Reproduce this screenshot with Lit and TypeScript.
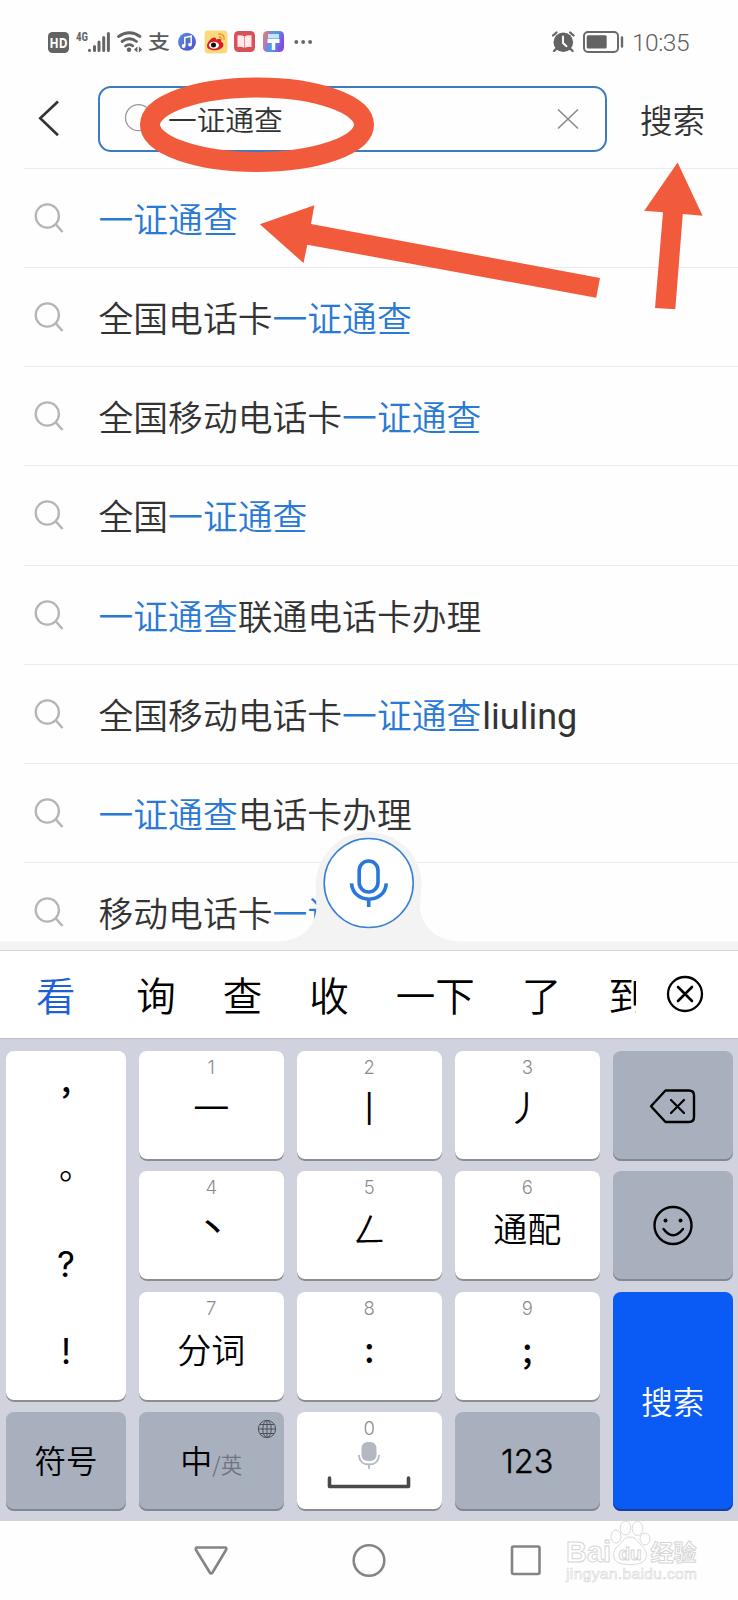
import { LitElement, html, css } from "lit";
import { customElement, property } from "lit/decorators.js";

type Part = { t: string; kind: "hit" | "plain" | "latin" };
const hit = (t: string): Part => ({ t, kind: "hit" });
const plain = (t: string): Part => ({ t, kind: "plain" });
const latin = (t: string): Part => ({ t, kind: "latin" });
const Q = "一证通查";

const SUGGESTIONS: Part[][] = [
  [hit(Q)],
  [plain("全国电话卡"), hit(Q)],
  [plain("全国移动电话卡"), hit(Q)],
  [plain("全国"), hit(Q)],
  [hit(Q), plain("联通电话卡办理")],
  [plain("全国移动电话卡"), hit(Q), latin("liuling")],
  [hit(Q), plain("电话卡办理")],
  [plain("移动电话卡"), hit(Q)],
];

@customElement("status-bar")
class StatusBar extends LitElement {
  static styles = css`
    :host { display: flex; height: 84px; box-sizing: border-box; padding: 17px 0 0 46px; align-items: flex-start; }
    .left { display: block; flex: none; width: 270px; height: 50px; }
    .right { display: block; flex: none; width: 76px; height: 50px; margin-left: 234px; }
    .clock { font: 300 24.5px/50px Roboto, sans-serif; color: #606060; margin-left: 6px; padding-top: 1px; letter-spacing: -0.5px; }
    .hd { font: 700 13.5px "Open Sans", sans-serif; fill: #fff; }
    .net { font: 700 12px "Roboto Condensed", Roboto, sans-serif; fill: #666; }
    .pay { font: 500 19px "Noto Sans CJK SC", sans-serif; fill: #5a5a5a; }
  `;
  render() {
    return html`
      <svg class="left" viewBox="46 17 270 50">
        <defs>
          <linearGradient id="m" x1="0" y1="0" x2="1" y2="1"><stop offset="0" stop-color="#5a8fe8" /><stop offset="1" stop-color="#4a4fc0" /></linearGradient>
          <linearGradient id="p" x1="0" y1="0" x2="1" y2="0.3"><stop offset="0" stop-color="#f2894a" /><stop offset="0.35" stop-color="#9a7ad8" /><stop offset="0.6" stop-color="#3aa8e8" /><stop offset="1" stop-color="#8a4ae0" /></linearGradient>
        </defs>
        <rect x="48" y="32" width="21" height="21" rx="4.5" fill="#636363" />
        <text class="hd" x="49.5" y="47.500" textLength="18" lengthAdjust="spacingAndGlyphs">HD</text>
        <text class="net" x="76" y="40.6" textLength="12" lengthAdjust="spacingAndGlyphs">4G</text>
        <g stroke="#666" stroke-width="3" stroke-linecap="round">
          <path d="M89.5 50.2v.4M94.5 46.5v4M99 42v8.5M103.7 37.5v13M108.4 33.5v17" />
        </g>
        <g fill="none" stroke="#636363" stroke-width="2.8" stroke-linecap="round">
          <path d="M118.5 36.5q11-7.5 21.5 0M122 41.5q7.5-5.5 14.5 0M125.5 46q3.5-2.6 7.2-.2" />
        </g>
        <circle cx="129" cy="49.8" r="2.2" fill="#636363" />
        <path d="M134 49.500l3.400-3v6zM142.300 49.500l-3.400-3v6z" fill="#636363" />
        <text class="pay" x="148" y="49" textLength="22" lengthAdjust="spacingAndGlyphs">支</text>
        <circle cx="187" cy="41.800" r="9" fill="url(#m)" />
        <path d="M184.800 46v-8.500l6.400-1.300v8" fill="none" stroke="#fff" stroke-width="1.500" />
        <circle cx="183.600" cy="46" r="1.900" fill="#fff" /><circle cx="190" cy="44.600" r="1.900" fill="#fff" />
        <rect x="204.500" y="30.500" width="23" height="23" rx="4" fill="#fadb7c" />
        <path d="M207 46c0-4 5-9.500 8-8.500 1.400.4 1 2 1 2s4-1.800 5 0c.6 1.200-.2 2-.2 2 2 .8 3 2 2.600 3.800C222.800 49 218 50.500 214 50.300 210 50 207 48.500 207 46z" fill="#d9202a" />
        <ellipse cx="214" cy="45.200" rx="5" ry="3.500" fill="#fff" /><circle cx="213.500" cy="45" r="2.500" fill="#111" />
        <path d="M218.500 34c4-.6 6.500 2.500 5.500 6M219 37c1.800-.2 2.800 1 2.400 2.500" fill="none" stroke="#f08a24" stroke-width="1.300" />
        <rect x="234" y="31" width="21" height="21" rx="4.500" fill="#d95158" />
        <path d="M237.500 35.500q4-.8 6.700.8v11.500q-3-1.300-6.700-.8zM251.500 35.500q-4-.8-6.700.8v11.500q3-1.300 6.700-.8z" fill="#ffe9ea" />
        <rect x="263" y="31" width="21" height="21" rx="4.500" fill="url(#p)" />
        <path d="M268 34h11v4.500h-11z" fill="#bfeaf5" /><path d="M267.500 39h12v4h-4.300v7h-3.400v-7h-4.300z" fill="#fff" />
        <g fill="#666"><circle cx="296.300" cy="42" r="1.900" /><circle cx="303.200" cy="42" r="1.900" /><circle cx="310.100" cy="42" r="1.900" /></g>
      </svg>
      <svg class="right" viewBox="550 17 76 50">
        <circle cx="563.300" cy="42.300" r="9.800" fill="#636363" />
        <path d="M553 35.500l3.500-3M573.600 35.500l-3.500-3M556 49l-2 2M570.600 49l2 2" stroke="#636363" stroke-width="2.300" stroke-linecap="round" />
        <path d="M563 36.500v6.500l3.500 3.200" fill="none" stroke="#fff" stroke-width="1.900" stroke-linecap="round" />
        <rect x="584" y="32" width="34" height="20" rx="4" fill="none" stroke="#6a6a6a" stroke-width="2" />
        <rect x="586.700" y="35.300" width="20" height="13.300" rx="1.500" fill="#636363" />
        <path d="M622 37.500v9" stroke="#6a6a6a" stroke-width="2.400" stroke-linecap="round" />
      </svg>
      <span class="clock">10:35</span>`;
  }
}

@customElement("search-header")
class SearchHeader extends LitElement {
  static styles = css`
    :host { display: flex; height: 84px; box-sizing: border-box; padding-top: 2px; align-items: flex-start; font-family: "Noto Sans CJK SC", sans-serif; color: #333; }
    .back { width: 98px; height: 66px; flex: none; }
    .box { width: 509px; height: 66px; flex: none; box-sizing: border-box; border: 2px solid #3b7cc0; border-radius: 13px; display: flex; align-items: center; }
    .glass { width: 32px; height: 32px; margin: 0 0 0 24px; flex: none; }
    .q { flex: 1; margin-left: 12px; font-size: 28.700px; line-height: 40px; font-weight: 350; }
    .clear { width: 24px; height: 24px; margin: 0 25px 0 0; }
    .go { margin-left: 33px; font-size: 32.500px; line-height: 66px; font-weight: 350; }
  `;
  render() {
    return html`
      <svg class="back" viewBox="0 86 98 66"><path d="M58 101.500L40.200 118.300 58 135.200" fill="none" stroke="#333" stroke-width="2.600" /></svg>
      <div class="box">
        <svg class="glass" viewBox="0 0 32 32"><circle cx="14.500" cy="14.700" r="13" fill="none" stroke="#999" stroke-width="1.300" /><path d="M24 24l6 6" stroke="#999" stroke-width="1.300" /></svg>
        <span class="q">一证通查</span>
        <svg class="clear" viewBox="0 0 24 24"><path d="M2 2.500l20 19M22 2.500l-20 19" stroke="#8a8a8a" stroke-width="1.600" /></svg>
      </div>
      <span class="go">搜索</span>`;
  }
}

@customElement("suggestion-row")
class SuggestionRow extends LitElement {
  @property({ attribute: false }) parts: Part[] = [];
  static styles = css`
    :host { display: flex; height: 99.150px; box-sizing: border-box; margin-left: 24px; border-top: 1px solid #ebebeb; align-items: center; font-family: "Noto Sans CJK SC", sans-serif; }
    .icon { width: 32px; height: 32px; margin: 0 32.500px 0 10px; flex: none; }
    .text { white-space: nowrap; font-size: 34.800px; line-height: 50px; color: #333; font-weight: 350; }
    .hit { color: #2a7ad5; }
    .latin { font: 400 36px/40px Roboto, sans-serif; margin-left: 1px; }
  `;
  render() {
    return html`
      <svg class="icon" viewBox="0 0 32 32"><circle cx="13.300" cy="14" r="11.600" fill="none" stroke="#b5b5b5" stroke-width="2.300" /><path d="M21.500 22l7 8" stroke="#b5b5b5" stroke-width="2.600" /></svg>
      <span class="text">${this.parts.map((p) => html`<span class=${p.kind}>${p.t}</span>`)}</span>`;
  }
}

@customElement("stroke-keyboard")
class StrokeKeyboard extends LitElement {
  static styles = css`
    :host { display: block; font-family: "Noto Sans CJK SC", sans-serif; color: #000; font-weight: 350; }
    .strip { display: flex; height: 88px; box-sizing: border-box; border-top: 1px solid #d6d6d6; background: #fff; align-items: center; }
    .cands { display: flex; width: 636px; overflow: hidden; white-space: nowrap; font-size: 39.500px; line-height: 60px; gap: 47px; box-sizing: border-box; padding-left: 36px; margin-top: -2px; }
    .cand { flex: none; }
    .first { color: #1f5fd6; margin-right: 13.700px; }
    .close { width: 40px; height: 40px; margin-left: 29px; flex: none; }
    .keys { display: grid; height: 483px; box-sizing: border-box; background: #d0d3dd; border-top: 1px solid #bbbfc6; padding: 12px 5px 9px 6px;
      grid-template-columns: 120px 145.500px 145.500px 145.500px 120.500px; grid-template-rows: 110px 110px 110px 99px; column-gap: 12.500px; row-gap: 10.300px; }
    .key { background: #fff; border-radius: 8px; box-shadow: inset 0 -2px 0 #8b8d92; display: grid; grid-template-rows: 29px 1fr; justify-items: center; font-size: 34px; line-height: 50px; }
    .num { font: 300 18.500px/20px Inter, sans-serif; color: #8c8c8c; padding-top: 6px; }
    .face { padding-top: 3px; }
    .stroke { font-size: 36px; padding-top: 1px; }
    .left { padding-right: 5px; }
    .dot { font-size: 31px; padding: 1px 0 0 3px; font-weight: 500; }
    .punct { font-weight: 500; padding-top: 3px; }
    .dark { background: #a8b0be; box-shadow: inset 0 -2px 0 #83878f; grid-template-rows: 1fr; align-items: center; }
    .side { grid-row: span 3; display: flex; flex-direction: column; gap: 37px; padding-top: 14px; align-items: center; }
    .latin { font: 400 35px/50px Inter, sans-serif; }
    .comma { line-height: 26px; margin-bottom: 24px; font-weight: 500; }
    .stop { line-height: 25px; margin: 0 0 25px 20px; }
    .go { grid-row: span 2; background: #0a5af5; box-shadow: inset 0 -2px 0 #1640a0; color: #fff; font-size: 31.500px; }
    .go .label { padding-bottom: 2px; }
    .sym .label { padding-bottom: 4px; }
    .sym { font-size: 31.500px; }
    .lang { position: relative; }
    .pair { font-size: 32px; display: flex; align-items: baseline; }
    .en { font-size: 21.500px; color: #6f747e; }
    .globe { position: absolute; right: 7px; top: 7px; width: 20px; height: 20px; }
    .digits { font: 300 32.500px/50px Inter, sans-serif; }
    .digits .label { padding-top: 1px; -webkit-text-stroke: 0.4px #000; }
    .ic { width: 60px; height: 50px; }
    .space { width: 90px; height: 58px; }
  `;
  key(n: string, face: string, kind = "") {
    return html`<div class="key"><span class="num">${n}</span><span class="face ${kind}">${face}</span></div>`;
  }
  render() {
    return html`
      <div class="strip">
        <div class="cands">
          <span class="cand first">看</span>${["询", "查", "收", "一下", "了", "到"].map((c) => html`<span class="cand">${c}</span>`)}
        </div>
        <svg class="close" viewBox="0 0 40 40" fill="none" stroke="#000" stroke-width="2.300"><circle cx="20" cy="19" r="17" /><path d="M13 12l14 14M27 12l-14 14" stroke-width="2.600" stroke-linecap="round" /></svg>
      </div>
      <div class="keys">
        <div class="key side">
          <span class="comma">,</span><span class="stop">。</span><span class="latin">?</span><span class="latin">!</span>
        </div>
        ${this.key("1", "一", "stroke")}${this.key("2", "丨", "stroke")}${this.key("3", "丿", "stroke left")}
        <div class="key dark"><svg class="ic" viewBox="0 0 60 50" fill="none" stroke="#000" stroke-width="2.400" stroke-linejoin="round"><path d="M22.500 9.500H46q5 0 5 5V36q0 5-5 5H22.500L8 25.200z" /><path d="M28 19l13 13M41 19l-13 13" stroke-width="2.200" stroke-linecap="round" /></svg></div>
        ${this.key("4", "丶", "dot")}${this.key("5", "ㄥ")}${this.key("6", "通配")}
        <div class="key dark"><svg class="ic" viewBox="0 0 60 50" fill="none" stroke="#000" stroke-width="2.400"><circle cx="30" cy="24.500" r="18.500" /><path d="M20.500 28q9.500 12.500 19.500 0" stroke-linecap="round" /><circle cx="22.500" cy="19.500" r="2" fill="#000" stroke="none" /><circle cx="37.500" cy="19.500" r="2" fill="#000" stroke="none" /></svg></div>
        ${this.key("7", "分词")}${this.key("8", ":", "punct")}${this.key("9", ";", "punct")}
        <div class="key dark go"><span class="label">搜索</span></div>
        <div class="key dark sym"><span class="label">符号</span></div>
        <div class="key dark lang">
          <span class="pair">中<span class="en">/英</span></span>
          <svg class="globe" viewBox="0 0 20 20" fill="none" stroke="#4a4f58" stroke-width="1"><circle cx="10" cy="10" r="8.600" /><ellipse cx="10" cy="10" rx="4.200" ry="8.600" /><path d="M10 1v18M1 10h18M3 5.500h14M3 14.500h14" /></svg>
        </div>
        <div class="key"><span class="num">0</span>
          <svg class="space" viewBox="0 0 90 58"><rect x="37.500" y="1" width="15" height="19" rx="6" fill="#b4b8c2" /><path d="M34.800 14q1 9.500 10.200 9.500T55.200 14M45 23v5" fill="none" stroke="#b4b8c2" stroke-width="1.800" /><path d="M5.500 37v8.500H84.500V37" fill="none" stroke="#4a4a4a" stroke-width="3.600" stroke-linecap="round" stroke-linejoin="round" /></svg>
        </div>
        <div class="key dark digits"><span class="label">123</span></div>
      </div>`;
  }
}

@customElement("app-root")
class AppRoot extends LitElement {
  static styles = css`
    :host { display: block; position: relative; width: 738px; height: 1600px; overflow: hidden; background: #fefefe; }
    .list { position: relative; height: 782px; overflow: hidden; }
    .dock { position: absolute; left: 0; bottom: 0; width: 738px; height: 122px; }
    .nav { display: flex; height: 79px; }
    .navicons { width: 738px; height: 79px; }
    .marks { position: absolute; left: 0; top: 0; width: 738px; height: 330px; }
    .wm { position: absolute; left: 560px; top: 1515px; width: 150px; height: 75px; }
    .w { fill: #fff; stroke: #d6d6d6; stroke-width: 1; font-family: "Liberation Sans", "Noto Sans CJK SC", sans-serif; font-weight: 700; }
    .w1 { font-size: 30px; }
    .w2 { font-size: 19px; }
    .w3 { font-size: 23px; font-family: "Noto Sans CJK SC", sans-serif; }
    .w4 { font-size: 15.500px; font-weight: 400; stroke-width: 0.600; }
  `;
  render() {
    return html`
      <status-bar></status-bar>
      <search-header></search-header>
      <div class="list">
        ${SUGGESTIONS.map((s) => html`<suggestion-row .parts=${s}></suggestion-row>`)}
        <svg class="dock" viewBox="0 828 738 122">
          <path d="M0 941.500H278C300 941 315 928 316.500 908Q316 900 315.700 885A53 53 0 0 1 421.700 885Q420 900 420 908C422 928 438 941 460 941.500H738V950H0z" fill="#f3f3f3" />
          <circle cx="368.700" cy="883" r="44.500" fill="#fff" stroke="#3b80d2" stroke-width="1.600" />
          <g fill="none" stroke="#2878dc" stroke-width="3.600"><rect x="359.200" y="861" width="18.800" height="31" rx="9.400" /><path d="M351.500 883.300C353 904.500 385 904.500 386.300 883.300M368.700 899.500V907" /></g>
        </svg>
      </div>
      <stroke-keyboard></stroke-keyboard>
      <div class="nav">
        <svg class="navicons" viewBox="0 1521 738 79" fill="none" stroke="#858585" stroke-width="2.600" stroke-linejoin="round">
          <path d="M197 1547.500H225.500Q227 1548 226 1550L212.500 1572.500Q211 1574.500 209.800 1572.500L196 1550Q195 1548 197 1547.500z" />
          <circle cx="369" cy="1560.500" r="15.300" /><rect x="512" y="1546.500" width="27.500" height="27.500" rx="1.500" />
        </svg>
      </div>
      <svg class="wm" viewBox="560 1515 150 75">
        <g fill="#fff" stroke="#dadada" stroke-width="1"><ellipse cx="616" cy="1536.500" rx="5" ry="6.500" /><ellipse cx="625.500" cy="1528" rx="5.300" ry="7" /><ellipse cx="637.500" cy="1528.500" rx="5.300" ry="7" /><ellipse cx="645" cy="1539" rx="5" ry="6" />
          <path d="M630 1537c6 0 8 6 12 9 6 5 6 14-1 17-5 2-17 2-22 0-7-3-7-12-1-17 4-3 6-9 12-9z" /></g>
        <text class="w w1" x="566" y="1562" textLength="45" lengthAdjust="spacingAndGlyphs">Bai</text>
        <text class="w w2" x="618.500" y="1559.500">du</text>
        <text class="w w3" x="650.500" y="1560.500">经验</text>
        <text class="w w4" x="566" y="1579" textLength="131">jingyan.baidu.com</text>
      </svg>
      <svg class="marks" viewBox="0 0 738 330">
        <ellipse cx="257" cy="124.700" rx="107" ry="37.200" fill="none" stroke="#f25a3c" stroke-width="20" />
        <path d="M259.800 224.300L314.400 205.300 311 224 600 278 596.200 297.700 307.300 244.700 303.500 263z" fill="#f25a3c" />
        <path d="M677.600 162.500L702.600 215.700 682.800 214 675.300 309.300 655 308 663 212.300 644.200 210.700z" fill="#f25a3c" />
      </svg>`;
  }
}
